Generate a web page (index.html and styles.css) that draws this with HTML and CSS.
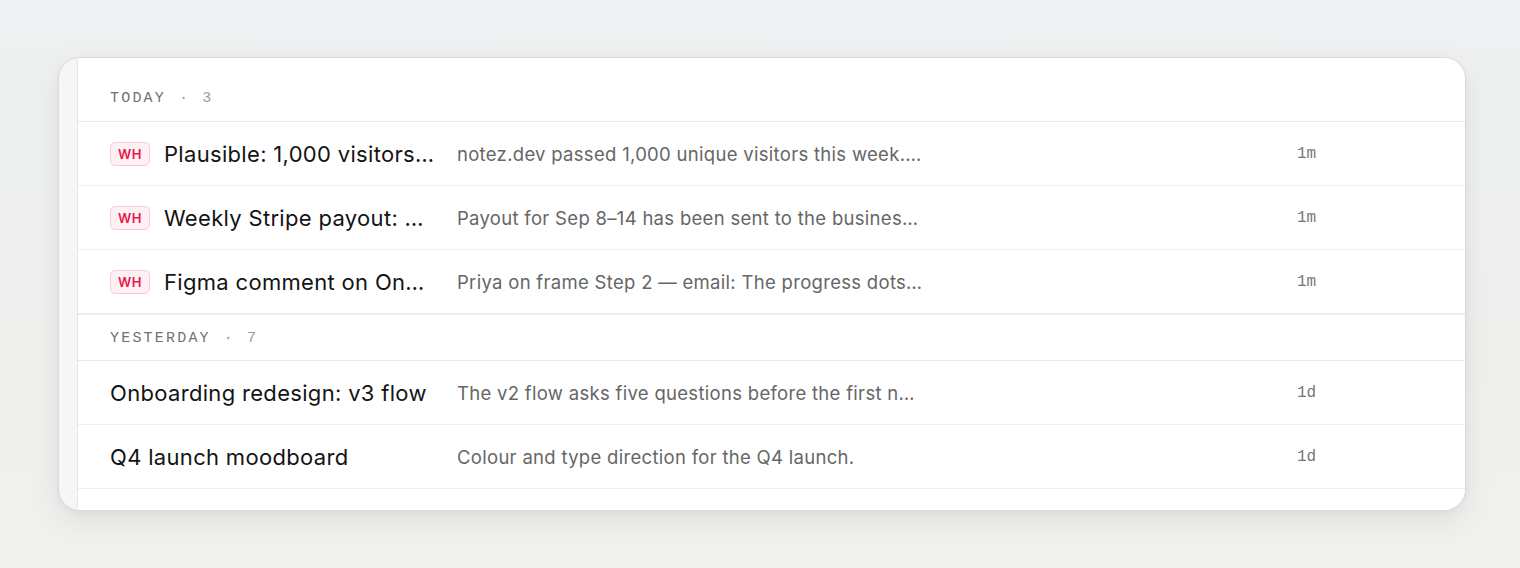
FILE: index.html
```html
<!DOCTYPE html>
<html>
<head>
<meta charset="utf-8">
<link rel="stylesheet" href="styles.css">
</head>
<body>
<div class="card">
  <div class="panel">
    <div class="group-head first">TODAY<span class="dot">·</span><span class="count">3</span></div>
    <div class="row">
      <div class="title"><span class="badge">WH</span><span class="ttext">Plausible: 1,000 visitors…</span></div>
      <div class="desc">notez.dev passed 1,000 unique visitors this week.…</div>
      <div class="time">1m</div>
    </div>
    <div class="row">
      <div class="title"><span class="badge">WH</span><span class="ttext">Weekly Stripe payout: …</span></div>
      <div class="desc">Payout for Sep 8–14 has been sent to the busines…</div>
      <div class="time">1m</div>
    </div>
    <div class="row last">
      <div class="title"><span class="badge">WH</span><span class="ttext">Figma comment on On…</span></div>
      <div class="desc">Priya on frame Step 2 — email: The progress dots…</div>
      <div class="time">1m</div>
    </div>
    <div class="group-head">YESTERDAY<span class="dot">·</span><span class="count">7</span></div>
    <div class="row">
      <div class="title"><span class="ttext">Onboarding redesign: v3 flow</span></div>
      <div class="desc">The v2 flow asks five questions before the first n…</div>
      <div class="time">1d</div>
    </div>
    <div class="row">
      <div class="title"><span class="ttext">Q4 launch moodboard</span></div>
      <div class="desc">Colour and type direction for the Q4 launch.</div>
      <div class="time">1d</div>
    </div>
    <div class="row"></div>
  </div>
</div>
</body>
</html>
```
FILE: styles.css
```css
html, body {
  margin: 0;
  height: 100%;
}
body {
  background: linear-gradient(180deg, #eef0f1 0%, #efefee 60%, #f0f0ee 100%);
  padding: 57px 54px 0 58px;
  box-sizing: border-box;
  font-family: Inter, "Noto Sans", sans-serif;
  overflow: hidden;
}
.card {
  height: 454px;
  box-sizing: border-box;
  border: 1px solid #dadada;
  border-radius: 22px;
  background: #f6f6f7;
  overflow: hidden;
  box-shadow: 0 10px 30px rgba(0, 0, 0, 0.07), 0 2px 6px rgba(0, 0, 0, 0.04);
  padding-left: 18px;
}
.panel {
  background: #fff;
  border-left: 1px solid #e6e6e6;
  height: 100%;
}
.group-head {
  font-family: "Liberation Mono", "DejaVu Sans Mono", monospace;
  font-size: 15px;
  line-height: 16px;
  letter-spacing: 2.2px;
  color: #727272;
  padding: 16px 32px 13px;
  border-top: 2px solid #eeeeee;
  border-bottom: 1px solid #e9e9e9;
}
.group-head.first {
  padding-top: 33px;
  padding-bottom: 14px;
  border-top: 0;
}
.group-head .dot,
.group-head .count {
  color: #9c9c9c;
}
.group-head .dot {
  margin: 0 12px 0 13px;
}
.row {
  display: grid;
  grid-template-columns: 331px 490px 1fr 60px;
  align-items: center;
  height: 63px;
  padding: 0 108px 0 32px;
  border-bottom: 1px solid #efefef;
}
.row.last {
  border-bottom: 0;
}
.title {
  display: flex;
  align-items: center;
  gap: 14px;
  min-width: 0;
}
.badge {
  flex: none;
  font-size: 13px;
  font-weight: 600;
  color: #e5194e;
  background: #fff0f3;
  border: 1px solid #fbcad6;
  border-radius: 5px;
  height: 22px;
  line-height: 22px;
  padding: 0 7px;
  letter-spacing: 0.5px;
}
.ttext {
  font-size: 22px;
  font-weight: 430;
  letter-spacing: 0.32px;
  color: #141414;
  white-space: nowrap;
  overflow: hidden;
  text-overflow: ellipsis;
  min-width: 0;
}
.desc {
  grid-column: 2;
  margin-left: 16px;
  font-size: 18.5px;
  letter-spacing: 0.3px;
  color: #666;
  white-space: nowrap;
  overflow: hidden;
  text-overflow: ellipsis;
}
.time {
  grid-column: 4;
  font-family: "Liberation Mono", "DejaVu Sans Mono", monospace;
  font-size: 16px;
  color: #777;
}
```
